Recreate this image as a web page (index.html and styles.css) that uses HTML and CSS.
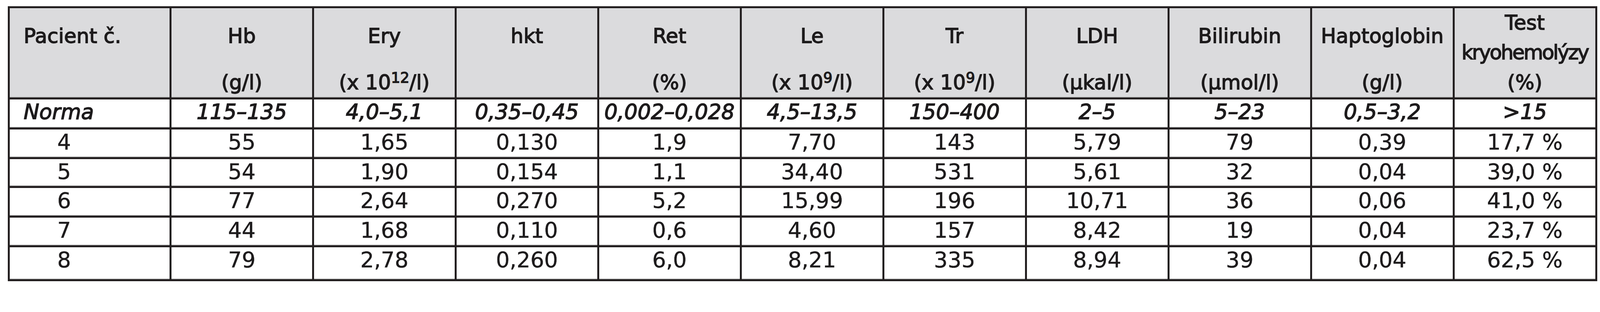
FILE: index.html
```html
<!DOCTYPE html>
<html lang="cs">
<head>
<meta charset="utf-8">
<title>Laboratorní hodnoty</title>
<link rel="stylesheet" href="styles.css">
</head>
<body>
<table class="lab">
  <thead>
    <tr>
      <th class="hc col-first"><div class="hc-in"><div class="hname">Pacient č.</div></div></th>
      <th class="hc"><div class="hc-in"><div class="hname">Hb</div><div class="hunit">(g/l)</div></div></th>
      <th class="hc"><div class="hc-in"><div class="hname">Ery</div><div class="hunit">(x 10<sup class="exp">12</sup>/l)</div></div></th>
      <th class="hc"><div class="hc-in"><div class="hname">hkt</div></div></th>
      <th class="hc"><div class="hc-in"><div class="hname">Ret</div><div class="hunit">(%)</div></div></th>
      <th class="hc"><div class="hc-in"><div class="hname">Le</div><div class="hunit">(x 10<sup class="exp">9</sup>/l)</div></div></th>
      <th class="hc"><div class="hc-in"><div class="hname">Tr</div><div class="hunit">(x 10<sup class="exp">9</sup>/l)</div></div></th>
      <th class="hc"><div class="hc-in"><div class="hname">LDH</div><div class="hunit">(µkal/l)</div></div></th>
      <th class="hc"><div class="hc-in"><div class="hname">Bilirubin</div><div class="hunit">(µmol/l)</div></div></th>
      <th class="hc"><div class="hc-in"><div class="hname">Haptoglobin</div><div class="hunit">(g/l)</div></div></th>
      <th class="hc"><div class="hc-in"><div class="hname hname-top">Test<br><span class="squeeze">kryohemolýzy</span></div><div class="hunit">(%)</div></div></th>
    </tr>
  </thead>
  <tbody>
    <tr class="norma">
      <td class="pid pid-label">Norma</td>
      <td>115–135</td><td>4,0–5,1</td><td>0,35–0,45</td><td>0,002–0,028</td><td>4,5–13,5</td><td>150–400</td><td>2–5</td><td>5–23</td><td>0,5–3,2</td><td>&gt;15</td>
    </tr>
    <tr class="row">
      <td class="pid">4</td>
      <td>55</td><td>1,65</td><td>0,130</td><td>1,9</td><td>7,70</td><td>143</td><td>5,79</td><td>79</td><td>0,39</td><td>17,7 %</td>
    </tr>
    <tr class="row row-short">
      <td class="pid">5</td>
      <td>54</td><td>1,90</td><td>0,154</td><td>1,1</td><td>34,40</td><td>531</td><td>5,61</td><td>32</td><td>0,04</td><td>39,0 %</td>
    </tr>
    <tr class="row">
      <td class="pid">6</td>
      <td>77</td><td>2,64</td><td>0,270</td><td>5,2</td><td>15,99</td><td>196</td><td>10,71</td><td>36</td><td>0,06</td><td>41,0 %</td>
    </tr>
    <tr class="row">
      <td class="pid">7</td>
      <td>44</td><td>1,68</td><td>0,110</td><td>0,6</td><td>4,60</td><td>157</td><td>8,42</td><td>19</td><td>0,04</td><td>23,7 %</td>
    </tr>
    <tr class="row row-last">
      <td class="pid">8</td>
      <td>79</td><td>2,78</td><td>0,260</td><td>6,0</td><td>8,21</td><td>335</td><td>8,94</td><td>39</td><td>0,04</td><td>62,5 %</td>
    </tr>
  </tbody>
</table>
</body>
</html>
```

FILE: styles.css
```css
/* one unit = one pixel of the 4430px-wide design, whatever the real viewport */
:root {
  --u: calc(100vw / 4430);
}

html {
  background: #ffffff;
  overflow: hidden;
}

body {
  margin: calc(17 * var(--u)) 0 0 calc(22 * var(--u));
  background: #ffffff;
}

.lab {
  width: calc(4400 * var(--u));
  table-layout: fixed;
  border-collapse: separate;
  border-spacing: calc(5.5 * var(--u));
  background: #231f20;
  font-family: "DejaVu Sans", "Liberation Sans", sans-serif;
  color: #1d1b1c;
}

.lab th,
.lab td {
  padding: 0;
  vertical-align: top;
  text-align: center;
  white-space: nowrap;
  background: #ffffff;
  box-shadow: inset 0 calc(-1.5 * var(--u)) 0 #9c9c9c;
}

.lab .col-first {
  width: calc(442 * var(--u));
}

/* header */
.lab th {
  background: #dbdbdd;
  font-weight: normal;
  font-size: calc(56 * var(--u));
  -webkit-text-stroke: calc(1.9 * var(--u)) #1d1b1c;
}

.hc-in {
  height: calc(248 * var(--u));
  display: flex;
  flex-direction: column;
  justify-content: space-between;
}

.hname {
  padding-top: calc(37 * var(--u));
  line-height: calc(82 * var(--u));
}

.hname-top {
  padding-top: 0;
}

.col-first .hname {
  text-align: left;
  padding-left: calc(38 * var(--u));
}

.hunit {
  height: calc(82 * var(--u));
  line-height: calc(82 * var(--u));
}

.exp {
  font-size: calc(40 * var(--u));
  line-height: 1;
  vertical-align: calc(18 * var(--u));
}

.squeeze {
  letter-spacing: calc(-3.5 * var(--u));
}

/* body rows */
.lab td {
  font-size: calc(60 * var(--u));
  line-height: normal;
  height: calc(77 * var(--u));
  -webkit-text-stroke: calc(0.6 * var(--u)) #1d1b1c;
}

.lab .norma td {
  font-size: calc(58 * var(--u));
  font-style: italic;
  height: calc(78 * var(--u));
  -webkit-text-stroke: calc(1.9 * var(--u)) #1d1b1c;
}

.lab .row-short td {
  height: calc(74 * var(--u));
}

.lab .row-last td {
  height: calc(89 * var(--u));
}

.lab td.pid {
  text-align: left;
  padding-left: calc(131 * var(--u));
}

.lab td.pid-label {
  padding-left: calc(38 * var(--u));
}
```
